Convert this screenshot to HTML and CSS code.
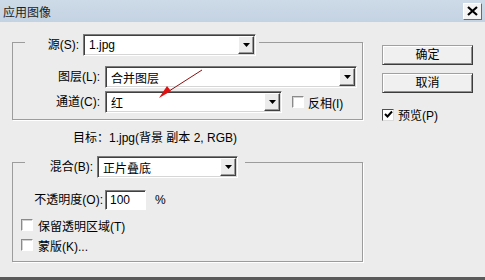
FILE: index.html
```html
<!DOCTYPE html>
<html>
<head>
    <title>应用图像</title>
    <link rel="stylesheet" href="styles.css">
</head>
<body>
    <div class="dialog">
        <div class="titlebar">
            <span class="title">应用图像</span>
            <span class="close">
                <svg width="11" height="10" viewBox="0 0 11 10"><path d="M1 1 L10 9 M10 1 L1 9" stroke="#000" stroke-width="2.2"/></svg>
            </span>
        </div>

        <div class="content">
            <div class="main">
                <fieldset class="group group-source">
                    <legend class="legend legend-source">
                        <span class="lbl lbl-source">源(S):</span>
                        <div class="select sel-source">
                            <span class="value">1.jpg</span>
                            <span class="drop"><svg width="7" height="4" viewBox="0 0 7 4"><polygon points="0,0 7,0 3.5,4" fill="#000"/></svg></span>
                        </div>
                    </legend>
                    <div class="row">
                        <span class="lbl lbl-row">图层(L):</span>
                        <div class="select sel-layer">
                            <span class="value">合并图层</span>
                            <span class="drop"><svg width="7" height="4" viewBox="0 0 7 4"><polygon points="0,0 7,0 3.5,4" fill="#000"/></svg></span>
                        </div>
                    </div>
                    <div class="row row-gap">
                        <span class="lbl lbl-row">通道(C):</span>
                        <div class="select sel-channel">
                            <span class="value">红</span>
                            <span class="drop"><svg width="7" height="4" viewBox="0 0 7 4"><polygon points="0,0 7,0 3.5,4" fill="#000"/></svg></span>
                        </div>
                        <span class="check check-invert"></span>
                        <span class="check-text">反相(I)</span>
                    </div>
                </fieldset>

                <p class="target">目标：1.jpg(背景 副本 2, RGB)</p>

                <fieldset class="group group-blend">
                    <legend class="legend legend-blend">
                        <span class="lbl lbl-blend">混合(B):</span>
                        <div class="select sel-blend">
                            <span class="value">正片叠底</span>
                            <span class="drop"><svg width="7" height="4" viewBox="0 0 7 4"><polygon points="0,0 7,0 3.5,4" fill="#000"/></svg></span>
                        </div>
                    </legend>
                    <div class="row row-opacity">
                        <span class="lbl lbl-opacity">不透明度(O):</span>
                        <span class="input">100</span>
                        <span class="unit">%</span>
                    </div>
                    <div class="check-row check-row-first">
                        <span class="check"></span>
                        <span class="check-text">保留透明区域(T)</span>
                    </div>
                    <div class="check-row">
                        <span class="check"></span>
                        <span class="check-text">蒙版(K)...</span>
                    </div>
                </fieldset>
            </div>

            <div class="side">
                <div class="button">确定</div>
                <div class="button button-cancel">取消</div>
                <div class="preview">
                    <span class="check check-on">
                        <svg width="9" height="9" viewBox="0 0 9 9"><path d="M1 4 L3.5 6.5 L8 1.5" stroke="#000" stroke-width="2" fill="none"/></svg>
                    </span>
                    <span class="check-text">预览(P)</span>
                </div>
            </div>

            <!-- annotation arrow drawn over the dialog -->
            <svg class="arrow" width="60" height="40" viewBox="0 0 60 40">
                <line x1="52" y1="2" x2="16" y2="25" stroke="#8a1010" stroke-width="1"/>
                <polygon points="9,30 21,23 17,18" fill="#e01010"/>
            </svg>
        </div>
    </div>
</body>
</html>
```

FILE: styles.css
```css
body {
    margin: 0;
    font-family: "Liberation Sans", "Noto Sans CJK SC", sans-serif;
    font-size: 12px;
    color: #000;
    background-color: #ececec;
}

.dialog {
    width: 485px;
    height: 280px;
    box-sizing: border-box;
    border-bottom: 3px solid #5a5a5a;
    background-color: #ececec;
    display: flex;
    flex-direction: column;
}

.titlebar {
    height: 22px;
    flex-shrink: 0;
    display: flex;
    align-items: center;
    justify-content: space-between;
    padding: 0 3px 0 3px;
    background: linear-gradient(#cddae7, #c4d3e3);
}

.title {
    color: #1e1e1e;
    font-size: 12px;
}

.close {
    width: 17px;
    height: 15px;
    display: flex;
    align-items: center;
    justify-content: center;
    background-color: #f4f4f4;
    border: 1px solid;
    border-color: #fff #6a6a6a #6a6a6a #fff;
}

.content {
    position: relative;
    flex: 1;
    display: flex;
    padding-left: 12px;
}

.main {
    width: 351px;
}

/* group boxes */
.group {
    margin: 0;
    min-width: 0;
    border: 1px solid #9c9c9c;
    box-shadow: 1px 1px 0 #fff;
}

.group-source {
    margin-top: 12px;
    padding: 15px 5px 6px 12px;
}

.group-blend {
    margin-top: 11px;
    padding: 21px 5px 6px 12px;
}

.legend {
    display: flex;
    align-items: flex-start;
    padding: 0;
}

.legend-source {
    height: 17px;
    padding-right: 3px;
}

.legend-blend {
    height: 13px;
    padding-right: 7px;
}

.lbl {
    text-align: right;
    line-height: 22px;
    white-space: nowrap;
}

.lbl-source {
    width: 54px;
    margin-right: 4px;
}

.lbl-row {
    width: 75px;
    margin-right: 5px;
}

.lbl-blend {
    width: 68px;
    margin-right: 4px;
}

.lbl-opacity {
    width: 78px;
    margin-right: 2px;
    line-height: 20px;
}

/* drop-down boxes */
.select {
    height: 22px;
    box-sizing: border-box;
    display: flex;
    align-items: center;
    justify-content: space-between;
    background-color: #fff;
    border: 1px solid;
    border-color: #7c7c7c #fff #fff #7c7c7c;
    box-shadow: inset 1px 1px 0 #404040, inset -1px -1px 0 #d6d6d6;
    padding: 1px 1px 1px 5px;
    flex-shrink: 0;
}

.sel-source {
    width: 173px;
}

.sel-layer {
    width: 252px;
}

.sel-channel {
    width: 177px;
}

.sel-blend {
    width: 141px;
}

.value {
    white-space: nowrap;
}

.drop {
    width: 16px;
    height: 18px;
    box-sizing: border-box;
    display: flex;
    align-items: center;
    justify-content: center;
    background-color: #ececec;
    border: 1px solid;
    border-color: #fff #404040 #404040 #fff;
    box-shadow: inset -1px -1px 0 #9a9a9a;
}

.row {
    display: flex;
    align-items: center;
    height: 22px;
}

.row-gap {
    margin-top: 3px;
}

.row-opacity {
    height: 20px;
}

.input {
    width: 41px;
    height: 20px;
    box-sizing: border-box;
    padding-left: 4px;
    line-height: 18px;
    background-color: #fff;
    border: 1px solid;
    border-color: #7c7c7c #fff #fff #7c7c7c;
    box-shadow: inset 1px 1px 0 #404040;
}

.unit {
    margin-left: 9px;
}

/* check boxes */
.check {
    width: 12px;
    height: 12px;
    box-sizing: border-box;
    display: flex;
    align-items: center;
    justify-content: center;
    background-color: #fff;
    border: 1px solid;
    border-color: #8a8a8a #fff #fff #8a8a8a;
    box-shadow: inset 1px 1px 0 #d2d2d2;
    flex-shrink: 0;
}

.check-on {
    border-color: #505050 #dcdcdc #dcdcdc #505050;
    box-shadow: none;
}

.check-invert {
    margin-left: 10px;
}

.check-text {
    margin-left: 4px;
    white-space: nowrap;
}

.check-row {
    display: flex;
    align-items: center;
    height: 20px;
    margin-left: -4px;
}

.check-row .check-text {
    margin-left: 5px;
}

.check-row-first {
    margin-top: 5px;
}

.target {
    margin: 11px 0 0 61px;
    line-height: 14px;
    white-space: nowrap;
}

/* buttons on the right */
.side {
    margin-left: 19px;
    width: 91px;
    padding-top: 23px;
    display: flex;
    flex-direction: column;
}

.button {
    height: 20px;
    box-sizing: border-box;
    line-height: 18px;
    text-align: center;
    background-color: #f0f0f0;
    border: 1px solid;
    border-color: #a0a0a0 #3c3c3c #3c3c3c #a0a0a0;
    box-shadow: inset 1px 1px 0 #fff, inset -1px -1px 0 #909090;
}

.button-cancel {
    margin-top: 8px;
}

.preview {
    display: flex;
    align-items: center;
    height: 15px;
    margin-top: 14px;
}

.arrow {
    position: absolute;
    left: 150px;
    top: 46px;
}
```
